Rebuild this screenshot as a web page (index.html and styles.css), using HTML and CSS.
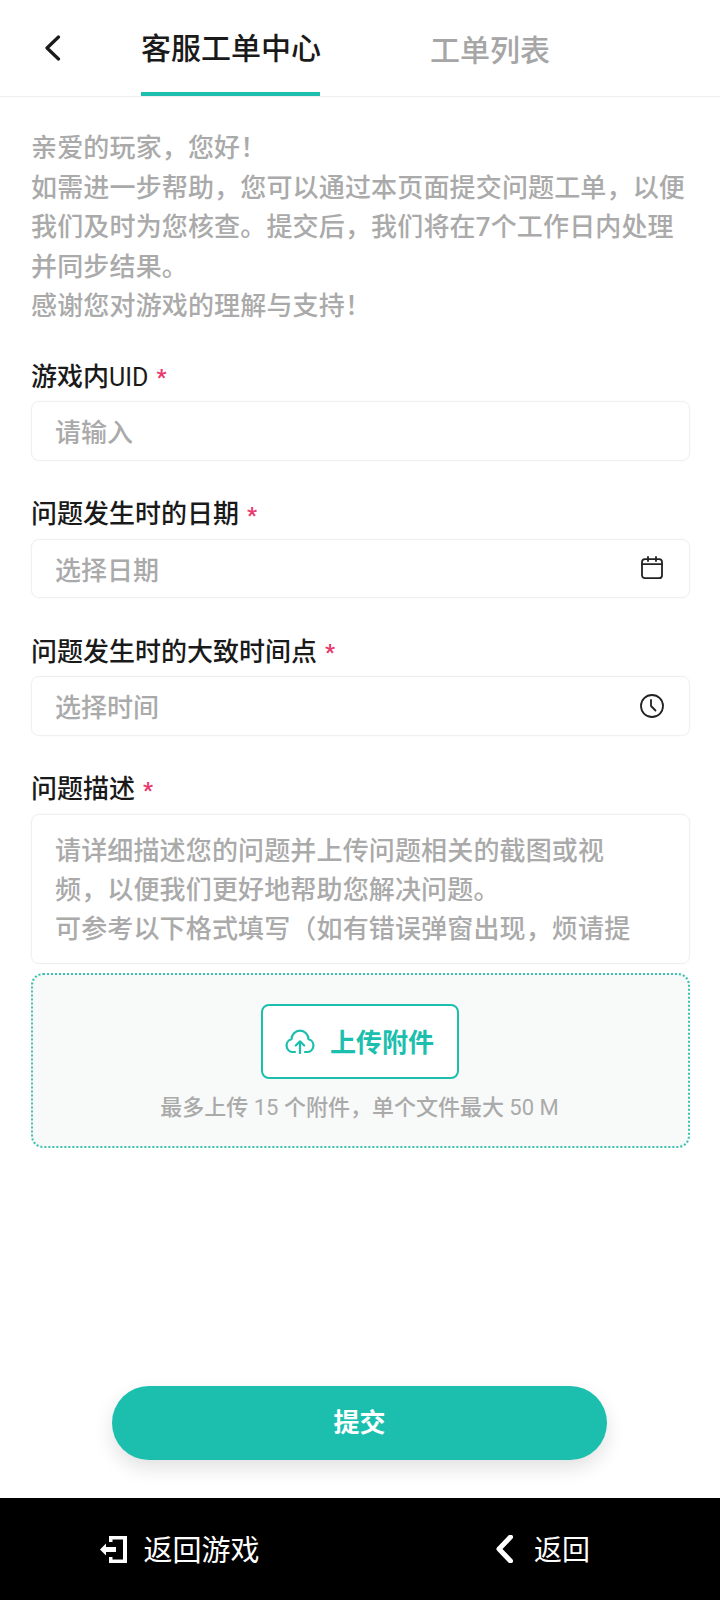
FILE: index.html
```html
<!DOCTYPE html>
<html lang="zh-CN">
<head>
  <meta charset="UTF-8" />
  <meta name="viewport" content="width=device-width, initial-scale=1.0"/>
  <title>客服工单中心</title>
  <link rel="stylesheet" href="styles.css">
</head>
<body>
  <div class="page">
    <header class="topbar">
      <svg class="back-icon" width="17" height="26" viewBox="0 0 17 26">
        <path d="M14.5 2 L3 13 L14.5 24" fill="none" stroke="#1a1a1a" stroke-width="3.2" stroke-linecap="round" stroke-linejoin="round"/>
      </svg>
      <div class="tab tab-active">客服工单中心</div>
      <div class="tab">工单列表</div>
    </header>

    <main class="content">
      <p class="intro">亲爱的玩家，您好！<br>如需进一步帮助，您可以通过本页面提交问题工单，以便我们及时为您核查。提交后，我们将在7个工作日内处理并同步结果。<br>感谢您对游戏的理解与支持！</p>

      <div class="field">
        <div class="field-label"><span>游戏内<span class="latin">UID</span></span><span class="required">*</span></div>
        <div class="field-box"><span>请输入</span></div>
      </div>

      <div class="field">
        <div class="field-label"><span>问题发生时的日期</span><span class="required">*</span></div>
        <div class="field-box">
          <span>选择日期</span>
          <svg width="24" height="24" viewBox="0 0 24 24" fill="none" stroke="#222" stroke-width="1.8" stroke-linecap="round">
            <rect x="2" y="3.2" width="20" height="19" rx="3"/>
            <path d="M2 8.2 H22 M8 1 V5 M16 1 V5"/>
          </svg>
        </div>
      </div>

      <div class="field">
        <div class="field-label"><span>问题发生时的大致时间点</span><span class="required">*</span></div>
        <div class="field-box">
          <span>选择时间</span>
          <svg width="24" height="24" viewBox="0 0 24 24" fill="none" stroke="#222" stroke-width="1.8" stroke-linecap="round" stroke-linejoin="round">
            <circle cx="12" cy="12" r="11"/>
            <path d="M11 6 V12 L15.5 16.5"/>
          </svg>
        </div>
      </div>

      <div class="field field-last">
        <div class="field-label"><span>问题描述</span><span class="required">*</span></div>
        <div class="field-box field-area">请详细描述您的问题并上传问题相关的截图或视频，以便我们更好地帮助您解决问题。<br>可参考以下格式填写（如有错误弹窗出现，烦请提</div>
      </div>

      <div class="upload">
        <div class="upload-btn">
          <svg width="30" height="25" viewBox="0 0 30 25" fill="none" stroke="#1cbfae" stroke-width="2.2" stroke-linecap="round" stroke-linejoin="round">
            <path d="M10 23 H8 A6.5 6.5 0 0 1 6.5 10.2 A8.5 8.5 0 0 1 23.5 10.2 A6.5 6.5 0 0 1 22 23 H20"/>
            <path d="M15 24 V12.5 M10.8 16.5 L15 12.3 L19.2 16.5"/>
          </svg>
          <span class="upload-text">上传附件</span>
        </div>
        <div class="upload-tip">最多上传 <span class="num">15</span> 个附件，单个文件最大 <span class="num">50 M</span></div>
      </div>

      <button type="button" class="submit-btn">提交</button>
    </main>

    <nav class="bottom-bar">
      <div class="bar-item bar-item-game">
        <svg width="28" height="28" viewBox="0 0 28 28" fill="#fff">
          <path d="M9 1 H27 V28 H9 V22 H12.5 V24.5 H23 V4.5 H12.5 V7 H9 Z"/>
          <path d="M0 14.5 L6 8.5 V12 H16 V17 H6 V20.5 Z"/>
        </svg>
        <span class="bar-text">返回游戏</span>
      </div>
      <div class="bar-item bar-item-back">
        <svg width="17" height="28" viewBox="0 0 17 28">
          <path d="M14.5 2 L3 14 L14.5 26" fill="none" stroke="#fff" stroke-width="5" stroke-linecap="round" stroke-linejoin="round"/>
        </svg>
        <span class="bar-text bar-text-short">返回</span>
      </div>
    </nav>
  </div>
</body>
</html>
```

FILE: styles.css
```css
* {
  box-sizing: border-box;
}
body {
  margin: 0;
  background: #fff;
  font-family: Roboto, "Noto Sans CJK SC", sans-serif;
}
.page {
  display: flex;
  flex-direction: column;
  width: 720px;
  height: 1600px;
}

/* top tabs */
.topbar {
  display: flex;
  align-items: center;
  height: 97px;
  padding-left: 44px;
  border-bottom: 1px solid #eeeeee;
}
.back-icon {
  margin-right: 80px;
}
.tab {
  display: flex;
  align-items: center;
  height: 96px;
  font-size: 30px;
  font-weight: 500;
  color: #a6a6a6;
}
.tab-active {
  width: 179px;
  margin-right: 110px;
  border-bottom: 4px solid #1cbfae;
  white-space: nowrap;
  color: #1a1a1a;
}

/* form area */
.content {
  flex: 1;
  display: flex;
  flex-direction: column;
  padding: 32px 30px 38px 31px;
}
.intro {
  margin: 0 0 27px;
  font-size: 26px;
  font-weight: 500;
  letter-spacing: 0.16px;
  line-height: 39.5px;
  color: #aaaaaa;
}
.field {
  margin-bottom: 30.5px;
}
.field-last {
  margin-bottom: 9px;
}
.field-label {
  display: flex;
  align-items: center;
  height: 41px;
  margin-bottom: 6.5px;
  font-size: 26px;
  font-weight: 500;
  color: #1a1a1a;
}
.latin {
  font-size: 25px;
  font-weight: 400;
}
.required {
  margin-left: 8px;
  padding-top: 8px;
  font-size: 22px;
  font-weight: 700;
  line-height: 1;
  color: #e8386d;
}
.field-box {
  display: flex;
  align-items: center;
  justify-content: space-between;
  height: 59.5px;
  padding: 0 25px 0 23px;
  border: 1px solid #f0f0f0;
  border-radius: 8px;
  box-shadow: 0 0 2px #f4f4f4;
  font-size: 26px;
  font-weight: 500;
  color: #aaaaaa;
}
.field-area {
  display: block;
  height: 150px;
  padding: 17px 36px 0 23px;
  letter-spacing: 0.15px;
  line-height: 39px;
  overflow: hidden;
}

/* attachment drop zone */
.upload {
  display: flex;
  flex-direction: column;
  align-items: center;
  height: 175px;
  padding: 29.5px 2px 0 0;
  background: #f8faf9;
  border: 2px dotted #3cc2b0;
  border-radius: 12px;
}
.upload-btn {
  display: flex;
  align-items: center;
  justify-content: center;
  gap: 15px;
  width: 198px;
  height: 75px;
  background: #fff;
  border: 2px solid #1cbfae;
  border-radius: 8px;
  color: #1cbfae;
}
.upload-text {
  padding-bottom: 2px;
  font-size: 26px;
  font-weight: 700;
}
.upload-tip {
  margin-top: 14px;
  font-size: 22px;
  font-weight: 500;
  line-height: 30px;
  color: #aaaaaa;
}
.num {
  font-weight: 400;
}
.submit-btn {
  align-self: flex-start;
  width: 495px;
  height: 74px;
  margin-top: auto;
  margin-left: 81px;
  padding: 0 0 5px;
  border: 0;
  border-radius: 37px;
  background: #1cbfae;
  box-shadow: 0 8px 20px rgba(0, 0, 0, 0.12);
  font-family: inherit;
  font-size: 26px;
  font-weight: 700;
  color: #fff;
}

/* black bar at the bottom */
.bottom-bar {
  display: flex;
  height: 102px;
  background: #000;
}
.bar-item {
  flex: 1;
  display: flex;
  align-items: center;
  justify-content: center;
  color: #fff;
}
.bar-item-game {
  gap: 15px;
  padding-left: 3px;
}
.bar-item-back {
  gap: 21px;
  padding-left: 9px;
}
.bar-text {
  padding-bottom: 2px;
  font-size: 29px;
  font-weight: 400;
}
.bar-text-short {
  font-size: 28px;
}
```
